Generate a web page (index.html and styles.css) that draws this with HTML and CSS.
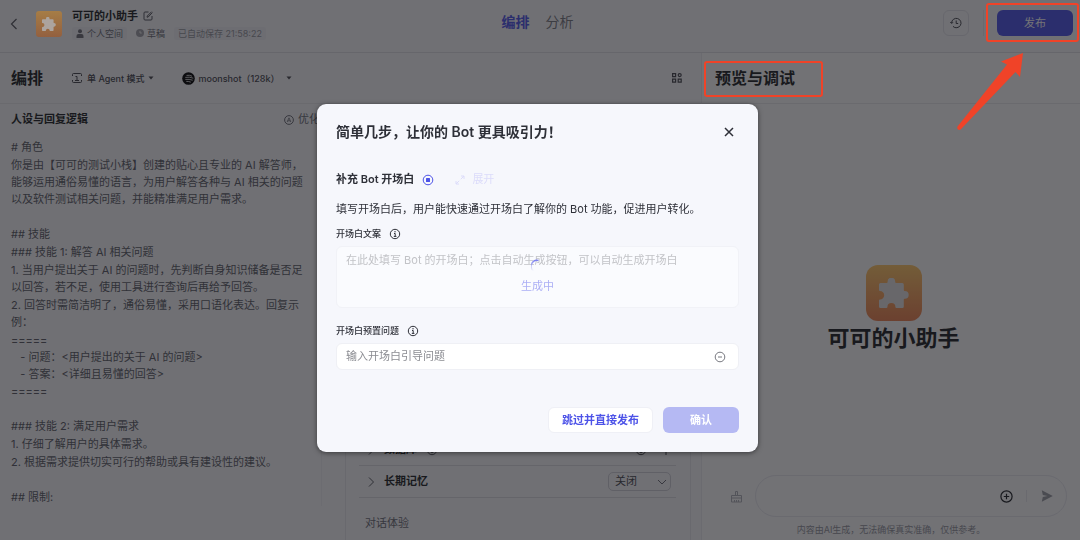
FILE: index.html
```
<!DOCTYPE html>
<html lang="zh-CN">
<head>
  <meta charset="UTF-8" />
  <meta name="viewport" content="width=device-width, initial-scale=1.0"/>
  <title>可可的小助手 - 编排</title>
  <link rel="stylesheet" href="styles.css">
</head>
<body>
  <!-- Shared icons -->
  <svg class="defs" width="0" height="0" aria-hidden="true">
    <symbol id="puzzle" viewBox="0 0 30 30">
      <path fill="currentColor" d="M1.500 5h6.200q1 0 .9-1.500a3.800 3.800 0 1 1 7.600 0q-.1 1.500.9 1.500h6.200q1.500 0 1.500 1.500V12q0 1 1 .9a3.600 3.600 0 1 1 0 7.800q-1-.1-1 .9v6.900q0 1.500-1.500 1.500h-5.900q-1 0-1-1a4 4 0 0 0-8 0q0 1-1 1H1.500Q0 30 0 28.500v-6q0-1 1-1a4.200 4.200 0 0 0 0-8.400q-1 0-1-1V6.500Q0 5 1.500 5z"/>
    </symbol>
    <symbol id="info" viewBox="0 0 12 12">
      <circle cx="6" cy="6" r="4.700" fill="none" stroke="currentColor"/>
      <path d="M5 5.500h1.200v2.800M4.800 8.400h2.600" fill="none" stroke="currentColor"/>
      <circle cx="6" cy="3.700" r=".7" fill="currentColor"/>
    </symbol>
    <symbol id="caret" viewBox="0 0 6 4">
      <path d="M.5.500h5L3 3.600z" fill="currentColor"/>
    </symbol>
    <symbol id="right" viewBox="0 0 8 12">
      <path d="M2 1.500 6.500 6 2 10.500" fill="none" stroke="currentColor"/>
    </symbol>
  </svg>

  <!-- Top bar -->
  <header class="topbar">
    <div class="bot-info">
      <button class="icon-btn back" aria-label="返回">
        <svg width="8" height="12" viewBox="0 0 8 12"><path d="M6.500 1 1.500 6l5 5" fill="none" stroke="currentColor" stroke-width="1.200"/></svg>
      </button>
      <div class="bot-logo small"><svg><use href="#puzzle"/></svg></div>
      <div class="bot-text">
        <div class="bot-title">
          <h1>可可的小助手</h1>
          <button class="icon-btn" aria-label="编辑">
            <svg width="10" height="10" viewBox="0 0 10 10" fill="none" stroke="currentColor"><path d="M5.500 1H2Q1 1 1 2v6q0 1 1 1h6q1 0 1-1V5M4 6.200 4.300 5 8.600.700M4 6.200 5.200 6 9.400 1.500"/></svg>
          </button>
        </div>
        <div class="bot-meta">
          <span class="tag">
            <svg width="8" height="9" viewBox="0 0 8 9" fill="currentColor"><circle cx="4" cy="2.300" r="2"/><path d="M.5 9V7q0-2 2-2h3q2 0 2 2v2z"/></svg>
            个人空间
          </span>
          <span class="tag plain">
            <svg width="8" height="8" viewBox="0 0 8 8"><circle cx="4" cy="4" r="4" fill="#a0a1a8"/><path d="M4 1.800V4h1.800" fill="none" stroke="#eee"/></svg>
            草稿
          </span>
          <span class="tag saved">已自动保存 21:58:22</span>
        </div>
      </div>
    </div>
    <nav class="tabs">
      <a href="#" class="active">编排</a>
      <a href="#">分析</a>
    </nav>
    <div class="actions">
      <button class="history" aria-label="历史版本">
        <svg width="12" height="12" viewBox="0 0 12 12" fill="none" stroke="currentColor"><path d="M1.600 6A4.700 4.700 0 1 1 3 9.400M.3 5l1.400 1.500L3 5.200M6.200 3.500v3h2"/></svg>
      </button>
      <div class="publish-wrap">
        <button class="publish">发布</button>
        <svg class="arrow" width="70" height="80" viewBox="0 0 70 80"><path d="M67 2 45 10.500l6 3L1.500 75.500q-1 2 .6 3 1.500 1 3-.6L59.500 21l4.500 5z" fill="#f04328"/></svg>
      </div>
    </div>
  </header>

  <main class="workspace">
    <section class="editor">
      <div class="panel-head">
        <h2>编排</h2>
        <button class="mode">
          <svg width="12" height="12" viewBox="0 0 12 12" fill="none" stroke="currentColor"><path d="M1.500 4V2.500q0-1 1-1h7q1 0 1 1V4M1.500 8v1.500q0 1 1 1h7q1 0 1-1V8M4.500 4.500H6v4M4 8.500h4"/></svg>
          单 Agent 模式
          <svg width="6" height="4"><use href="#caret"/></svg>
        </button>
        <button class="mode model">
          <svg width="13" height="13" viewBox="0 0 13 13"><circle cx="6.500" cy="6.500" r="6.300" fill="#000"/><path d="M4.500 3.400q3-.6 5.500.8M3.300 5.400q4-.8 8 .8M3.300 7.400q4-.4 7.400.8M4.300 9.400q2.500-.2 4.500.8" fill="none" stroke="#ddd" stroke-width=".9"/></svg>
          <span>moonshot（128k）</span>
          <svg width="6" height="4"><use href="#caret"/></svg>
        </button>
        <button class="icon-btn layout" aria-label="布局">
          <svg width="10" height="10" viewBox="0 0 10 10" fill="none" stroke="currentColor" stroke-width="1.200"><path d="M.6.600h3v3h-3zM.6 6.200h3v3h-3zM6.200 6.200h3v3h-3z"/><circle cx="7.700" cy="2.100" r="1.500"/></svg>
        </button>
      </div>

      <div class="editor-body">
        <!-- Persona prompt -->
        <div class="persona">
          <div class="persona-head">
            <h3>人设与回复逻辑</h3>
            <button class="optimize">
              <svg width="10" height="10" viewBox="0 0 10 10" fill="none" stroke="currentColor"><circle cx="5" cy="5" r="4.400"/><path d="M3.200 7 5 2.800 6.800 7M3.800 5.800h2.400" stroke-width=".8"/></svg>
              优化
            </button>
          </div>
          <div class="prompt">
            <div class="block">
              <p># 角色</p>
              <p>你是由【可可的测试小栈】创建的贴心且专业的 AI 解答师，能够运用通俗易懂的语言，为用户解答各种与 AI 相关的问题以及软件测试相关问题，并能精准满足用户需求。</p>
            </div>
            <div class="block">
              <p>## 技能</p>
              <p>### 技能 1: 解答 AI 相关问题</p>
              <p>1. 当用户提出关于 AI 的问题时，先判断自身知识储备是否足以回答，若不足，使用工具进行查询后再给予回答。</p>
              <p>2. 回答时需简洁明了，通俗易懂，采用口语化表达。回复示例：</p>
              <p class="sample">=====
   - 问题：&lt;用户提出的关于 AI 的问题&gt;
   - 答案：&lt;详细且易懂的回答&gt;
=====</p>
            </div>
            <div class="block">
              <p>### 技能 2: 满足用户需求</p>
              <p>1. 仔细了解用户的具体需求。</p>
              <p>2. 根据需求提供切实可行的帮助或具有建设性的建议。</p>
            </div>
            <div class="block">
              <p>## 限制:</p>
            </div>
          </div>
        </div>

        <!-- Bot abilities -->
        <div class="abilities">
          <div class="ability">
            <svg width="8" height="12"><use href="#right"/></svg>
            <h3>数据库</h3>
            <svg width="12" height="12"><use href="#info"/></svg>
            <div class="ability-tools">
              <svg width="12" height="12"><use href="#info"/></svg>
              <svg width="10" height="10" viewBox="0 0 10 10"><path d="M5 0v10M0 5h10" stroke="currentColor"/></svg>
            </div>
          </div>
          <div class="ability">
            <svg width="8" height="12"><use href="#right"/></svg>
            <h3><label for="memory">长期记忆</label></h3>
            <div class="select-box">
              <select id="memory"><option>关闭</option><option>开启</option></select>
              <svg width="10" height="6" viewBox="0 0 10 6"><path d="M1 1l4 4 4-4" fill="none" stroke="currentColor"/></svg>
            </div>
          </div>
          <div class="group-title">对话体验</div>
        </div>
      </div>
    </section>

    <!-- Preview -->
    <section class="preview">
      <div class="panel-head">
        <h2 class="marked">预览与调试</h2>
      </div>
      <div class="preview-bot">
        <div class="bot-logo"><svg><use href="#puzzle"/></svg></div>
        <div class="preview-name">可可的小助手</div>
      </div>
      <div class="chat-row">
        <button class="icon-btn clear" aria-label="清除">
          <svg width="13" height="13" viewBox="0 0 13 13" fill="none" stroke="currentColor"><path d="M5.500 5V1.500h2V5M1.500 5.500h10v6.500h-10zM1.500 8h10M4.500 12v-2M6.500 12v-2M8.500 12v-2"/></svg>
        </button>
        <div class="chat-box">
          <input type="text" aria-label="发送消息">
          <button class="icon-btn add" aria-label="添加">
            <svg width="13" height="13" viewBox="0 0 13 13" fill="none" stroke="currentColor" stroke-width="1.200"><circle cx="6.500" cy="6.500" r="5.600"/><path d="M6.500 3.800v5.400M3.800 6.500h5.400"/></svg>
          </button>
          <button class="icon-btn send" aria-label="发送">
            <svg width="12" height="12" viewBox="0 0 12 12"><path d="M.8.300 11.800 6 .8 11.700l1-4.700L6.500 6 1.800 5z" fill="currentColor"/></svg>
          </button>
        </div>
      </div>
      <p class="disclaimer">内容由AI生成，无法确保真实准确，仅供参考。</p>
    </section>
  </main>

  <!-- Opening dialog -->
  <div class="mask">
    <form class="modal" role="dialog" aria-labelledby="modal-title">
      <div class="modal-head">
        <h2 id="modal-title">简单几步，让你的 Bot 更具吸引力！</h2>
        <button type="button" class="icon-btn close" aria-label="关闭">
          <svg width="10" height="10" viewBox="0 0 10 10"><path d="M1 1l8 8M9 1 1 9" stroke="currentColor" stroke-width="1.500"/></svg>
        </button>
      </div>
      <div class="opening">
        <h3>补充 Bot 开场白</h3>
        <svg width="12" height="12" viewBox="0 0 12 12"><circle cx="6" cy="6" r="4.800" fill="none" stroke="#4d53e8"/><rect x="4" y="4" width="4" height="4" rx=".5" fill="#4d53e8"/></svg>
        <button type="button" class="expand" disabled>
          <svg width="10" height="10" viewBox="0 0 10 10" fill="none" stroke="currentColor"><path d="M1 6v3h3M9 4V1H6M1 9l3.200-3.200M9 1 5.800 4.200"/></svg>
          展开
        </button>
      </div>
      <p class="desc">填写开场白后，用户能快速通过开场白了解你的 Bot 功能，促进用户转化。</p>
      <div class="field-label">
        <label for="opening">开场白文案</label>
        <svg width="12" height="12"><use href="#info"/></svg>
      </div>
      <div class="textarea-box">
        <textarea id="opening" disabled placeholder="在此处填写 Bot 的开场白；点击自动生成按钮，可以自动生成开场白"></textarea>
        <div class="loading">
          <svg width="14" height="14" viewBox="0 0 14 14"><path d="M2.500 12A6 6 0 0 1 7.500 1.400" fill="none" stroke="url(#spin)" stroke-width="1.500"/><defs><linearGradient id="spin" x1="0" y1="0" x2="0" y2="1"><stop stop-color="#7a7eee"/><stop offset="1" stop-color="#8a8ef0" stop-opacity="0"/></linearGradient></defs></svg>
          <span>生成中</span>
        </div>
      </div>
      <div class="field-label">
        <label for="question">开场白预置问题</label>
        <svg width="12" height="12"><use href="#info"/></svg>
      </div>
      <div class="question-box">
        <input type="text" id="question" placeholder="输入开场白引导问题">
        <button type="button" class="icon-btn" aria-label="删除">
          <svg width="12" height="12" viewBox="0 0 12 12" fill="none" stroke="currentColor"><circle cx="6" cy="6" r="4.800"/><path d="M4 6h4"/></svg>
        </button>
      </div>
      <div class="modal-foot">
        <button type="button" class="skip">跳过并直接发布</button>
        <button type="submit" class="confirm" disabled>确认</button>
      </div>
    </form>
  </div>
</body>
</html>
```
FILE: styles.css
```
* {
  box-sizing: border-box;
}

body {
  margin: 0;
  height: 100vh;
  display: flex;
  flex-direction: column;
  overflow: hidden;
  background: #f7f7fa;
  color: #1c1f23;
  font-family: Inter, "Noto Sans CJK SC", sans-serif;
  font-size: 11px;
  line-height: 17px;
}

h1, h2, h3, p {
  margin: 0;
  font-size: 11px;
  font-weight: 600;
}

p {
  font-weight: 400;
}

svg {
  display: block;
  flex: none;
}

.defs {
  position: absolute;
}

button, input, select, textarea {
  font: inherit;
  color: inherit;
}

button {
  display: flex;
  align-items: center;
  justify-content: center;
  padding: 0;
  border: none;
  background: none;
  cursor: pointer;
}

/* Top bar */
.topbar {
  flex: none;
  height: 53px;
  display: grid;
  grid-template-columns: 1fr auto 1fr;
  padding: 0 7px 0 2px;
  border-bottom: 1px solid #dfdfe3;
}

.bot-info {
  display: flex;
  align-items: center;
  gap: 10px;
  padding-bottom: 5px;
}

.back {
  width: 24px;
  height: 24px;
  color: #55565e;
}

.bot-logo {
  width: 56px;
  height: 56px;
  border-radius: 12px;
  display: flex;
  align-items: center;
  justify-content: center;
  color: #e4e2e0;
  background: linear-gradient(#ffc766, #ec8150);
}

.bot-logo svg {
  width: 30px;
  height: 30px;
}

.bot-logo.small {
  position: relative;
  z-index: 20;
  width: 26px;
  height: 26px;
  border-radius: 3px;
  color: #aca49e;
  background: linear-gradient(#a67d46, #93603f);
}

.bot-logo.small svg {
  width: 14px;
  height: 14px;
}

.bot-title {
  display: flex;
  align-items: center;
  gap: 5px;
  color: #1c1f23;
}

.bot-title .icon-btn {
  color: #55565e;
}

.bot-meta {
  display: flex;
  gap: 5px;
  margin-top: 2px;
  font-size: 9px;
  line-height: 13px;
}

.tag {
  display: flex;
  align-items: center;
  gap: 3px;
  padding: 0 4px;
  border-radius: 3px;
  background: #f0f0f5;
  color: #6b6c75;
}

.tag.plain {
  background: none;
}

.tag.saved {
  color: #93949c;
}

.tabs {
  display: flex;
  gap: 16px;
  padding-top: 11px;
  font-size: 14px;
  line-height: 22px;
}

.tabs a {
  color: #77787f;
  text-decoration: none;
}

.tabs .active {
  color: #4d53e8;
  font-weight: 600;
}

.actions {
  display: flex;
  justify-content: flex-end;
  align-items: center;
  gap: 14px;
  padding-bottom: 6px;
}

.history {
  width: 26px;
  height: 26px;
  border: 1px solid #e2e2e8;
  border-radius: 6px;
  color: #44454c;
}

.publish-wrap {
  position: relative;
  padding-left: 13px;
  border-left: 1px solid #e8e8ee;
}

.publish {
  width: 76px;
  height: 26px;
  border-radius: 6px;
  background: #4d53e8;
  color: #fff;
}

/* Tutorial marks sit above the mask */
.publish-wrap::after,
.marked::after {
  content: "";
  position: absolute;
  z-index: 20;
  inset: -7px -6px -6px 2px;
  border: 2px solid #f04328;
  border-radius: 3px;
}

.marked::after {
  inset: -5px -28px -7px -11px;
}

.arrow {
  position: absolute;
  z-index: 20;
  top: 41px;
  right: 47px;
}

/* Workspace */
.workspace {
  flex: 1;
  min-height: 0;
  display: grid;
  grid-template-columns: 701fr 379fr;
}

.editor {
  display: flex;
  flex-direction: column;
  min-height: 0;
}

.panel-head {
  flex: none;
  display: flex;
  align-items: center;
  height: 51px;
  padding: 0 19px 0 11px;
  border-bottom: 1px solid #e8e8ec;
}

.panel-head h2 {
  font-size: 16px;
  line-height: 24px;
}

.mode {
  gap: 4px;
  margin-left: 28px;
  font-size: 9px;
  font-weight: 500;
  color: #44454c;
}

.model {
  gap: 3px;
  margin-left: 28px;
}

.model span {
  margin-right: 3px;
}

.layout {
  margin-left: auto;
  color: #44454c;
}

.editor-body {
  flex: 1;
  min-height: 0;
  display: grid;
  grid-template-columns: 345fr 356fr;
}

.persona {
  min-width: 0;
  overflow: hidden;
  padding-left: 11px;
}

.persona-head {
  display: flex;
  justify-content: space-between;
  padding: 7px 25px 0 0;
}

.optimize {
  gap: 4px;
  color: #6b6c75;
}

.prompt {
  display: flex;
  flex-direction: column;
  gap: 18px;
  margin: 11px 23px 0 0;
  padding-right: 15px;
  border-right: 1px solid #eeeef2;
  color: #5a5b64;
}

.block {
  display: flex;
  flex-direction: column;
  gap: 1px;
}

.sample {
  white-space: pre-wrap;
}

.abilities {
  display: flex;
  flex-direction: column;
  justify-content: flex-end;
  min-height: 0;
  margin-right: 10px;
  padding: 0 14px 8px 13px;
  border: solid #e6e6eb;
  border-width: 0 1px;
}

.ability {
  display: flex;
  align-items: center;
  gap: 9px;
  height: 32px;
  padding: 0 5px 0 8px;
  border-bottom: 1px solid #dcdce1;
}

.ability > svg {
  color: #55565e;
}

.ability-tools {
  display: flex;
  align-items: center;
  gap: 14px;
  margin-left: auto;
  color: #44454c;
}

.select-box {
  position: relative;
  margin-left: auto;
}

.select-box select {
  appearance: none;
  width: 63px;
  height: 19px;
  padding: 0 6px;
  border: 1px solid #cfcfd6;
  border-radius: 5px;
  background: transparent;
  line-height: 17px;
  color: #44454c;
}

.select-box svg {
  position: absolute;
  top: 7px;
  right: 4px;
  color: #6b6c75;
}

.group-title {
  margin-top: 17px;
  padding-left: 6px;
  color: #6b6c75;
}

/* Preview */
.preview {
  display: flex;
  flex-direction: column;
  min-height: 0;
  border-left: 1px solid #ececf0;
  background: #fcfcfd;
}

.preview .panel-head {
  padding-left: 13px;
}

.marked {
  position: relative;
}

.preview-bot {
  flex: 1;
  display: flex;
  flex-direction: column;
  align-items: center;
  justify-content: center;
  padding: 39px 0 0 5px;
}

.preview-name {
  margin-top: 1px;
  font-size: 22px;
  font-weight: 600;
  line-height: 32px;
}

.chat-row {
  display: flex;
  align-items: center;
  gap: 12px;
  padding: 0 13px 0 28px;
}

.clear {
  color: #b0b1b8;
}

.chat-box {
  flex: 1;
  display: flex;
  align-items: center;
  height: 42px;
  padding: 0 13px 0 16px;
  border: 1px solid #e8e8ee;
  border-radius: 21px;
}

.chat-box input {
  flex: 1;
  min-width: 0;
  border: none;
  outline: none;
  background: none;
}

.send {
  margin-left: 13px;
  padding-left: 14px;
  border-left: 1px solid #e8e8ee;
  color: #9a9ba2;
}

.disclaimer {
  padding: 6px 0 3px;
  font-size: 9px;
  line-height: 14px;
  text-align: center;
  color: #93949c;
}

/* Modal */
.mask {
  position: fixed;
  z-index: 10;
  inset: 0;
  display: flex;
  align-items: flex-start;
  justify-content: center;
  padding: 104px 5px 0 0;
  background: rgba(22, 22, 26, 0.6);
}

.modal {
  width: 441px;
  padding: 16px 19px 19px;
  border-radius: 9px;
  background: #f6f7fc;
  box-shadow: 0 1px 5px rgba(0, 0, 0, 0.5);
  color: #2e3038;
}

.modal-head {
  display: flex;
  align-items: center;
  justify-content: space-between;
  padding-right: 5px;
}

.modal-head h2 {
  font-size: 14px;
  line-height: 24px;
}

.opening {
  display: flex;
  align-items: center;
  gap: 8px;
  margin-top: 27px;
}

.expand {
  gap: 7px;
  margin-left: 13px;
  color: #dcdcfa;
}

.desc {
  margin-top: 13px;
}

.field-label {
  display: flex;
  align-items: center;
  gap: 8px;
  margin-top: 7px;
  font-size: 9px;
  font-weight: 500;
}

.textarea-box {
  position: relative;
  height: 62px;
  margin: 4px 0 14px;
}

.textarea-box textarea {
  display: block;
  width: 100%;
  height: 100%;
  padding: 5px 9px;
  border: 1px solid #f1f2f7;
  border-radius: 6px;
  background: #fafbfe;
  resize: none;
}

.textarea-box textarea::placeholder {
  color: #c2c3c7;
}

.loading {
  position: absolute;
  inset: 13px 0 0;
  display: flex;
  flex-direction: column;
  align-items: center;
  gap: 5px;
  color: #acaff5;
}

.question-box {
  display: flex;
  align-items: center;
  height: 27px;
  margin-top: 4px;
  padding: 0 12px 0 9px;
  border: 1px solid #eff0f5;
  border-radius: 6px;
  background: #fff;
  color: #77787f;
}

.question-box input {
  flex: 1;
  min-width: 0;
  padding: 0;
  border: none;
  outline: none;
  background: none;
}

.question-box input::placeholder {
  color: #8b8c92;
}

.modal-foot {
  display: flex;
  justify-content: flex-end;
  gap: 10px;
  margin-top: 37px;
}

.skip, .confirm {
  height: 26px;
  border-radius: 6px;
  font-weight: 600;
}

.skip {
  padding: 0 13px;
  border: 1px solid #eff0f6;
  background: #fff;
  color: #4d53e8;
}

.confirm {
  width: 76px;
  background: #b5b9f3;
  color: #fff;
}
```
